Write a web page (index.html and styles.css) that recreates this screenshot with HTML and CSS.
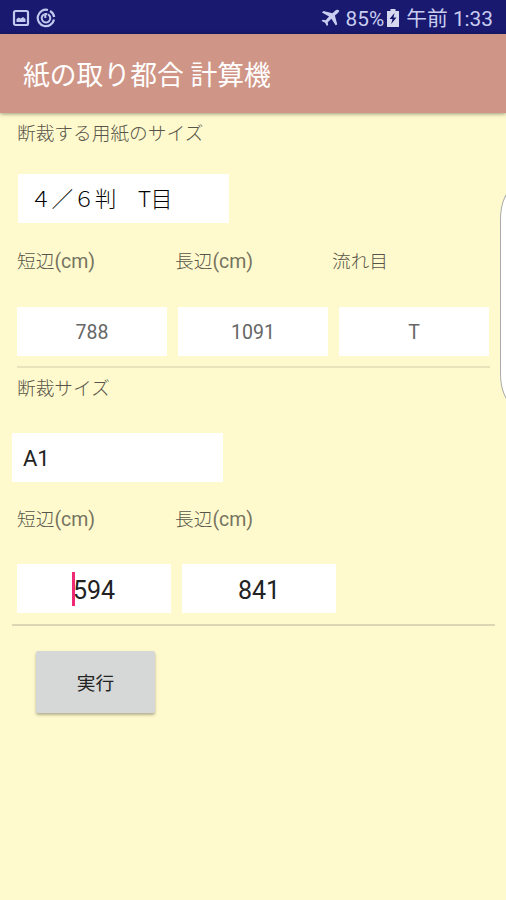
FILE: index.html
```html
<!DOCTYPE html>
<html lang="ja">
<head>
    <meta charset="UTF-8">
    <meta name="viewport" content="width=device-width, initial-scale=1.0">
    <title>紙の取り都合 計算機</title>
    <link rel="stylesheet" href="styles.css">
</head>
<body>
    <div class="status-bar">
        <div class="status-icons">
            <svg width="18" height="18" viewBox="0 0 18 18">
                <rect x="2" y="2" width="14" height="14" rx="1.5" fill="none" stroke="#c3c8ef" stroke-width="2.2"/>
                <path d="M4.500 13V10l2-1.500 2 1 2.500-1.500 2.500 2v3z" fill="#c3c8ef"/>
            </svg>
            <svg width="20" height="20" viewBox="0 0 20 20" fill="none" stroke="#c3c8ef" stroke-width="2.2">
                <path d="M12 2A8.2 8.2 0 1 0 18 11.5"/>
                <path d="M14 3A8.2 8.2 0 0 1 18.2 9"/>
                <path d="M8 6.3A4.3 4.3 0 1 0 12 6.3M9.3 10V6h2" stroke-width="2"/>
            </svg>
        </div>
        <div class="status-info">
            <svg width="19" height="18" viewBox="0 0 20 18">
                <path d="M18.8.8c-1.3-1.1-3-.5-4.2.7L12 4 2.6 1.5 1 3.1l7.5 4.4-3.7 3.8-3-.4L.6 12.200l3.700 1.800 1.900 3.500 1.300-1.200-.4-2.900 3.800-3.600 4.700 7.200 1.500-1.500-2.500-9.200 2.900-2.400c1.200-1.200 2.300-2.200 1.300-3.100z" fill="#c9cdf0"/>
            </svg>
            <span class="percent">85%</span>
            <svg class="battery" width="12" height="18" viewBox="0 0 12 18">
                <path d="M3.500 0h5v2H12v16H0V2h3.500z" fill="#d5d8ef"/>
                <path d="M7.500 4 2.500 10h3L4.200 15l5.300-6.600H6.500z" fill="#15166b"/>
            </svg>
            <span class="clock">午前 1:33</span>
        </div>
    </div>

    <header class="app-bar">
        <h1>紙の取り都合 計算機</h1>
    </header>

    <main>
        <section class="paper">
            <p class="label">断裁する用紙のサイズ</p>
            <div class="select">４／６判　T目</div>
            <div class="labels">
                <span>短辺<span class="unit">(cm)</span></span>
                <span>長辺<span class="unit">(cm)</span></span>
                <span>流れ目</span>
            </div>
            <div class="fields">
                <div class="field">788</div>
                <div class="field">1091</div>
                <div class="field">T</div>
            </div>
        </section>

        <section class="cut">
            <p class="label">断裁サイズ</p>
            <div class="select">A1</div>
            <div class="labels">
                <span>短辺<span class="unit">(cm)</span></span>
                <span>長辺<span class="unit">(cm)</span></span>
            </div>
            <div class="fields">
                <div class="field"><span class="caret"></span>594</div>
                <div class="field">841</div>
            </div>
        </section>

        <button type="button">実行</button>
    </main>

    <div class="edge-handle"></div>
</body>
</html>
```
FILE: styles.css
```css
* {
    margin: 0;
    padding: 0;
    box-sizing: border-box;
}

body {
    position: relative;
    height: 900px;
    overflow: hidden;
    font-family: Roboto, "Noto Sans CJK JP", sans-serif;
    background: #fffacd;
    color: #222;
}

.status-bar {
    display: flex;
    justify-content: space-between;
    align-items: center;
    height: 34px;
    padding: 2px 13px 0 12px;
    background: #19196f;
    color: #c9cdf0;
}

.status-icons {
    display: flex;
    align-items: center;
    gap: 6px;
}

.status-info {
    display: flex;
    align-items: center;
    font-size: 20.8px;
    line-height: 32px;
    white-space: nowrap;
}

.percent {
    margin-left: 6px;
    padding-top: 1px;
}

.battery {
    margin: 0 7px 0 3px;
}

.clock {
    padding-top: 1px;
}

.app-bar {
    position: relative;
    height: 79px;
    padding-left: 23px;
    background: #cf9586;
    box-shadow: 0 1px 4px rgba(0, 0, 0, 0.4);
}

h1 {
    padding-top: 2px;
    font-size: 26.8px;
    font-weight: 400;
    line-height: 81px;
    color: #fff;
    white-space: nowrap;
}

.paper {
    height: 255px;
    margin: 0 16px 0 17px;
    padding-top: 6px;
    border-bottom: 2px solid #e8e3bb;
}

.cut {
    height: 258px;
    margin: 0 11px 0 12px;
    padding-top: 6px;
    border-bottom: 2px solid #dcd7b2;
}

.label,
.labels {
    height: 30px;
    font-size: 18.7px;
    font-weight: 300;
    line-height: 30px;
    color: #57554a;
}

.labels {
    display: grid;
    grid-template-columns: 158px 157px 1fr;
    margin-top: 24px;
}

.unit {
    font-size: 19.5px;
    font-weight: 400;
    color: #757360;
}

.cut .label,
.cut .labels,
.cut .fields {
    margin-left: 5px;
}

.select {
    width: 211px;
    height: 49px;
    margin: 25px 0 0 1px;
    padding-left: 12px;
    background: #fff;
    font-size: 21.6px;
    font-weight: 300;
    line-height: 51px;
    color: #000;
    white-space: pre;
}

.cut .select {
    margin: 29px 0 0;
    padding-left: 11px;
    font-size: 22px;
    font-weight: 400;
    color: #222;
}

.fields {
    display: grid;
    grid-template-columns: repeat(3, 150px);
    gap: 11px;
    margin-top: 30px;
}

.cut .labels {
    margin-top: 23px;
}

.cut .fields {
    grid-template-columns: repeat(2, 154px);
    margin-top: 29px;
}

.field {
    height: 49px;
    background: #fff;
    font-size: 19.500px;
    line-height: 52px;
    text-align: center;
    color: #666;
}

.cut .field {
    position: relative;
    font-size: 25px;
    line-height: 53px;
    color: #222;
}

.caret {
    position: absolute;
    top: 8px;
    left: 55px;
    width: 3px;
    height: 34px;
    background: #ee2a74;
}

button {
    display: block;
    width: 119px;
    height: 62px;
    margin: 25px 0 0 36px;
    padding-bottom: 2px;
    border: none;
    border-radius: 2px;
    background: #d6d7d7;
    box-shadow: 0 2px 3px rgba(0, 0, 0, 0.3);
    font-family: inherit;
    font-size: 18.7px;
    color: #222;
}

/* edge panel handle, partly off screen */
.edge-handle {
    position: absolute;
    top: 189px;
    right: -22px;
    width: 28px;
    height: 215px;
    border: 1px solid #aaa;
    border-radius: 14px / 30px;
    background: #fff;
}
```
